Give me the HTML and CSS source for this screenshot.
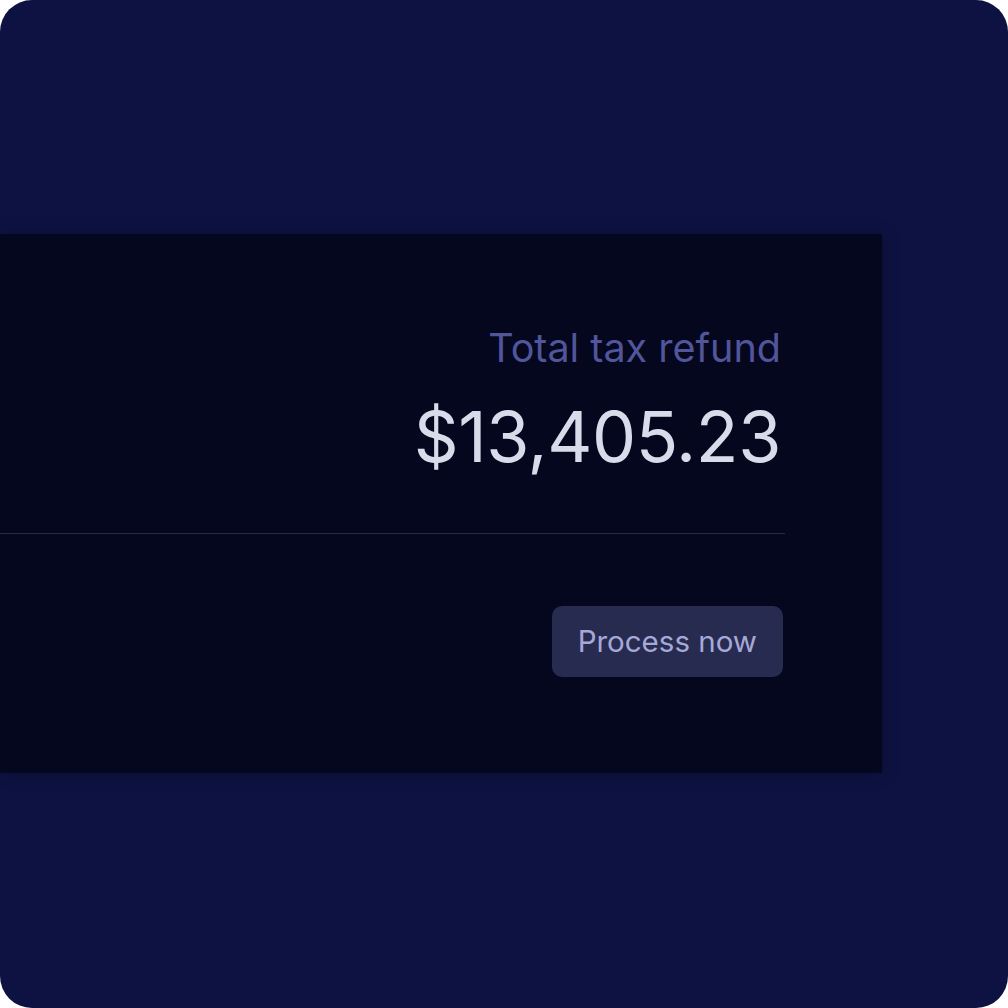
FILE: index.html
```html
<!DOCTYPE html>
<html lang="en">
<head>
    <meta charset="UTF-8">
    <meta name="viewport" content="width=device-width, initial-scale=1.0">
    <title>Tax refund</title>
    <link rel="stylesheet" href="styles.css">
</head>
<body>
    <div class="frame">
        <div class="panel">
            <div class="summary">
                <div class="label">Total tax refund</div>
                <div class="amount">$13,405.23</div>
            </div>
            <div class="actions">
                <button class="process-btn">Process now</button>
            </div>
        </div>
    </div>
</body>
</html>
```

FILE: styles.css
```css
body {
    margin: 0;
    background-color: #ffffff;
    font-family: Inter, "Noto Sans", sans-serif;
}
.frame {
    width: 1008px;
    height: 1008px;
    background-color: #0d1242;
    border-radius: 32px;
    padding-top: 234px;
    box-sizing: border-box;
    overflow: hidden;
}
.panel {
    width: 882px;
    height: 539px;
    background-color: #05071f;
    box-shadow: 0 0 16px rgba(0, 0, 0, 0.25);
    box-sizing: border-box;
    padding-top: 90px;
}
.summary {
    width: 785px;
    text-align: right;
    border-bottom: 1px solid #262a4e;
    padding-bottom: 54px;
}
.label {
    color: #51559a;
    font-size: 39.5px;
    line-height: 48px;
    padding-right: 4px;
}
.amount {
    color: #d9dbea;
    font-size: 70px;
    line-height: 84px;
    letter-spacing: -0.4px;
    margin-top: 23px;
    padding-right: 4px;
}
.actions {
    width: 783px;
    display: flex;
    justify-content: flex-end;
    margin-top: 72px;
}
.process-btn {
    font-family: inherit;
    font-size: 29.5px;
    line-height: 36px;
    color: #a6a9d8;
    background-color: #282b50;
    border: none;
    border-radius: 10px;
    padding: 17px 26px 18px;
    height: 71px;
}
```
